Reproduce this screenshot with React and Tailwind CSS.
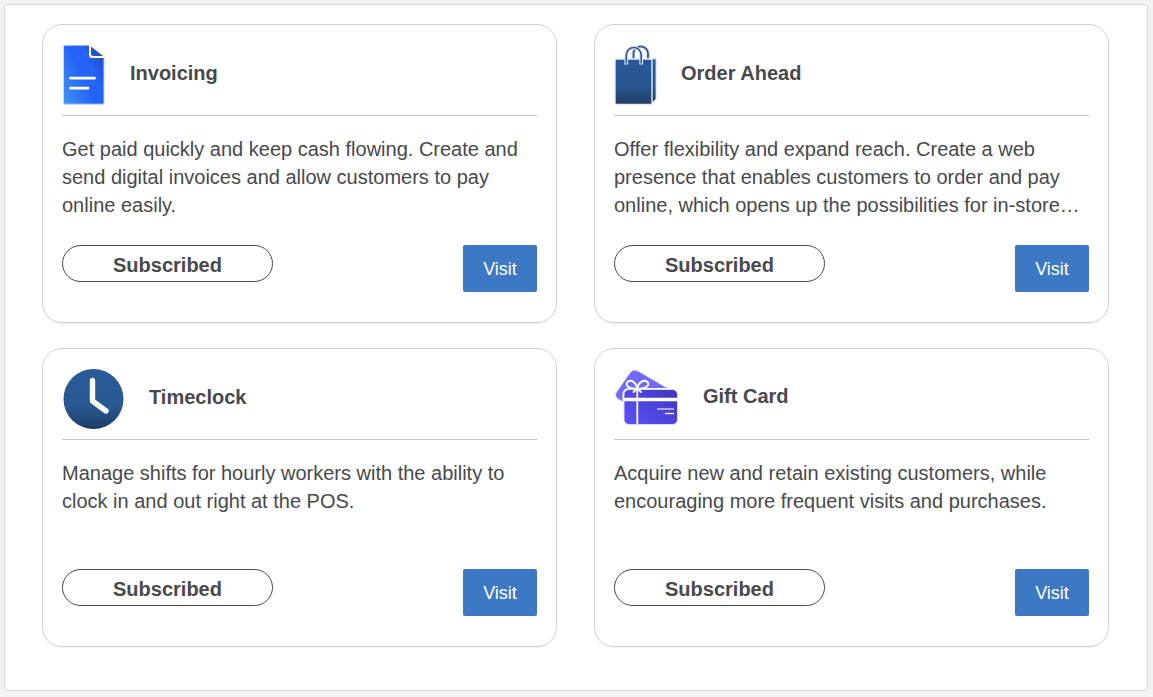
import React from "react";

function InvoiceIcon() {
  return (
    <svg width="43" height="61" viewBox="0 0 43 61" aria-hidden="true">
      <defs>
        <linearGradient id="inv" x1="0" y1="1" x2="1" y2="0.3">
          <stop offset="0" stopColor="#3f97f0" />
          <stop offset="0.55" stopColor="#2563f8" />
          <stop offset="0.75" stopColor="#2563f8" />
          <stop offset="1" stopColor="#2350c4" />
        </linearGradient>
      </defs>
      <path d="M3 1.200H29L42 12V58.500Q42 60.200 40.500 60.200H3Q1.500 60.200 1.500 58.700V2.700Q1.500 1.200 3 1.200Z" fill="url(#inv)" stroke="#c3d4fa" strokeWidth="1" />
      <path d="M27 1L29.500 1L42.500 12V14H30Q27 14 27 11Z" fill="#fff" />
      <path d="M29 2.500 41 12H31.500Q29 12 29 9.500Z" fill="#2456c8" />
      <path d="M8.500 34.500H32.500M8.500 44.500H26" transform="translate(0 -.3)" stroke="#fff" strokeWidth="2.700" strokeLinecap="round" />
    </svg>
  );
}

function BagIcon() {
  return (
    <svg width="42" height="61" viewBox="0 0 42 61" className="overflow-visible" aria-hidden="true">
      <defs>
        <linearGradient id="bag" x1="0" y1="0" x2="0" y2="1">
          <stop offset="0" stopColor="#27599a" />
          <stop offset="0.6" stopColor="#27568f" />
          <stop offset="1" stopColor="#213c60" />
        </linearGradient>
      </defs>
      <path d="M19.500 15V9A7.300 7.300 0 0 1 34 9V15" fill="none" stroke="#cdd6e2" strokeWidth="3.600" />
      <path d="M19.500 15V9A7.300 7.300 0 0 1 34 9V15" fill="none" stroke="#27518a" strokeWidth="1.600" />
      <path d="M4 15H42V55L36 60.500H4Z" fill="url(#bag)" stroke="#cad3df" />
      <path d="M2.500 15H36Q38 15 38 17V60.500H2.500Q1 60.500 1 59V17Q1 15 2.500 15Z" fill="url(#bag)" stroke="#e6ebf2" strokeWidth="1.400" />
      <path d="M12.300 20.500V11A7.400 7.400 0 0 1 27.200 11V20.500" fill="none" stroke="#dce3ed" strokeWidth="3.800" />
      <path d="M12.300 19.500V11A7.400 7.400 0 0 1 27.200 11V19.500" fill="none" stroke="#2d5a95" strokeWidth="1.600" />
    </svg>
  );
}

function ClockIcon() {
  return (
    <svg width="62" height="61" viewBox="0 0 62 61" aria-hidden="true">
      <defs>
        <linearGradient id="clock" x1="0" y1="0" x2="0" y2="1">
          <stop offset="0" stopColor="#285c9a" />
          <stop offset="0.62" stopColor="#285890" />
          <stop offset="1" stopColor="#1e3d66" />
        </linearGradient>
      </defs>
      <circle cx="31.500" cy="31" r="30" fill="url(#clock)" />
      <path d="M30.500 12.500V33L44 43" fill="none" stroke="#fff" strokeWidth="5.400" strokeLinecap="round" strokeLinejoin="round" />
    </svg>
  );
}

function GiftCardIcon() {
  return (
    <svg width="64" height="58" viewBox="0 0 64 58" className="overflow-visible" aria-hidden="true">
      <defs>
        <linearGradient id="gift" x1="0" y1="0.7" x2="1" y2="0">
          <stop offset="0" stopColor="#574ff0" />
          <stop offset="0.5" stopColor="#4d43dc" />
          <stop offset="1" stopColor="#4035b8" />
        </linearGradient>
      </defs>
      <path d="M16.500 4Q19.500 .500 24 3L54 20.500 40 45 10 34.500 4 31Q0 28 2.500 24Z" fill="#7069f9" stroke="#dcdafc" />
      <rect x="8.500" y="20" width="56" height="38" rx="6" fill="#fff" />
      <rect x="10" y="21.500" width="53.500" height="35" rx="5" fill="url(#gift)" stroke="#dcdafc" />
      <path d="M10 31.500H63.500" stroke="#fff" strokeWidth="3.500" />
      <path d="M23.300 19V56" stroke="#fff" strokeWidth="1.800" />
      <path d="M23.300 20.500C15 21.500 10.500 17 13.500 14C17 11 22 14 23.300 20.500ZM23.300 20.500C31.500 21.500 36.500 17 33.500 14C30 11 24.500 14 23.300 20.500ZM23.300 20.500 19.500 24M23.300 20.500 27 24" fill="none" stroke="#fff" strokeWidth="1.900" strokeLinecap="round" strokeLinejoin="round" />
      <path d="M43 41H60" stroke="#b9b1f4" strokeWidth="1.800" />
      <path d="M51 45.500H60" stroke="#fff" strokeWidth="1.300" />
    </svg>
  );
}

const products = [
  {
    title: "Invoicing",
    Icon: InvoiceIcon,
    text: "Get paid quickly and keep cash flowing. Create and send digital invoices and allow customers to pay online easily.",
  },
  {
    title: "Order Ahead",
    Icon: BagIcon,
    text: "Offer flexibility and expand reach. Create a web presence that enables customers to order and pay online, which opens up the possibilities for in-store…",
  },
  {
    title: "Timeclock",
    Icon: ClockIcon,
    text: "Manage shifts for hourly workers with the ability to clock in and out right at the POS.",
  },
  {
    title: "Gift Card",
    Icon: GiftCardIcon,
    text: "Acquire new and retain existing customers, while encouraging more frequent visits and purchases.",
  },
];

function ProductCard({ title, Icon, text }) {
  return (
    <article className="flex flex-col rounded-[20px] border border-[#d2d2d2] px-[19px] pt-[19px] pb-[30px] shadow-[0_1px_1px_rgba(0,0,0,0.06)]">
      <header className="flex min-h-[72px] items-start border-b border-[#c2c2c2]">
        <div className="flex items-center gap-[25px]">
          <Icon />
          <h2 className="pb-[3px] text-[20px] leading-6 font-bold">{title}</h2>
        </div>
      </header>
      <p className="mt-[19px] min-h-[84px] grow text-[20px] leading-7">{text}</p>
      <div className="mt-[26px] flex items-start justify-between">
        <span className="flex h-[37px] w-[211px] items-center justify-center rounded-full border border-[#48494d] pt-[2px] text-[20px] leading-6 font-bold">
          Subscribed
        </span>
        <button type="button" className="h-[47px] w-[74px] rounded-[2px] bg-[#3c78c3] pt-[2px] text-[18px] text-white">
          Visit
        </button>
      </div>
    </article>
  );
}

export default function App() {
  return (
    <div className="min-h-screen bg-[#f2f2f2] pt-1 pr-[5px] pb-[6px] pl-1 font-['Liberation_Sans',Arial,sans-serif] text-[#48494d]">
      <main className="grid grid-cols-1 gap-x-[37px] gap-y-[25px] rounded-[3px] border border-[#d6d6d6] bg-white pt-[19px] pr-[38px] pb-[43px] pl-[37px] md:grid-cols-2">
        {products.map((product) => (
          <ProductCard key={product.title} {...product} />
        ))}
      </main>
    </div>
  );
}
